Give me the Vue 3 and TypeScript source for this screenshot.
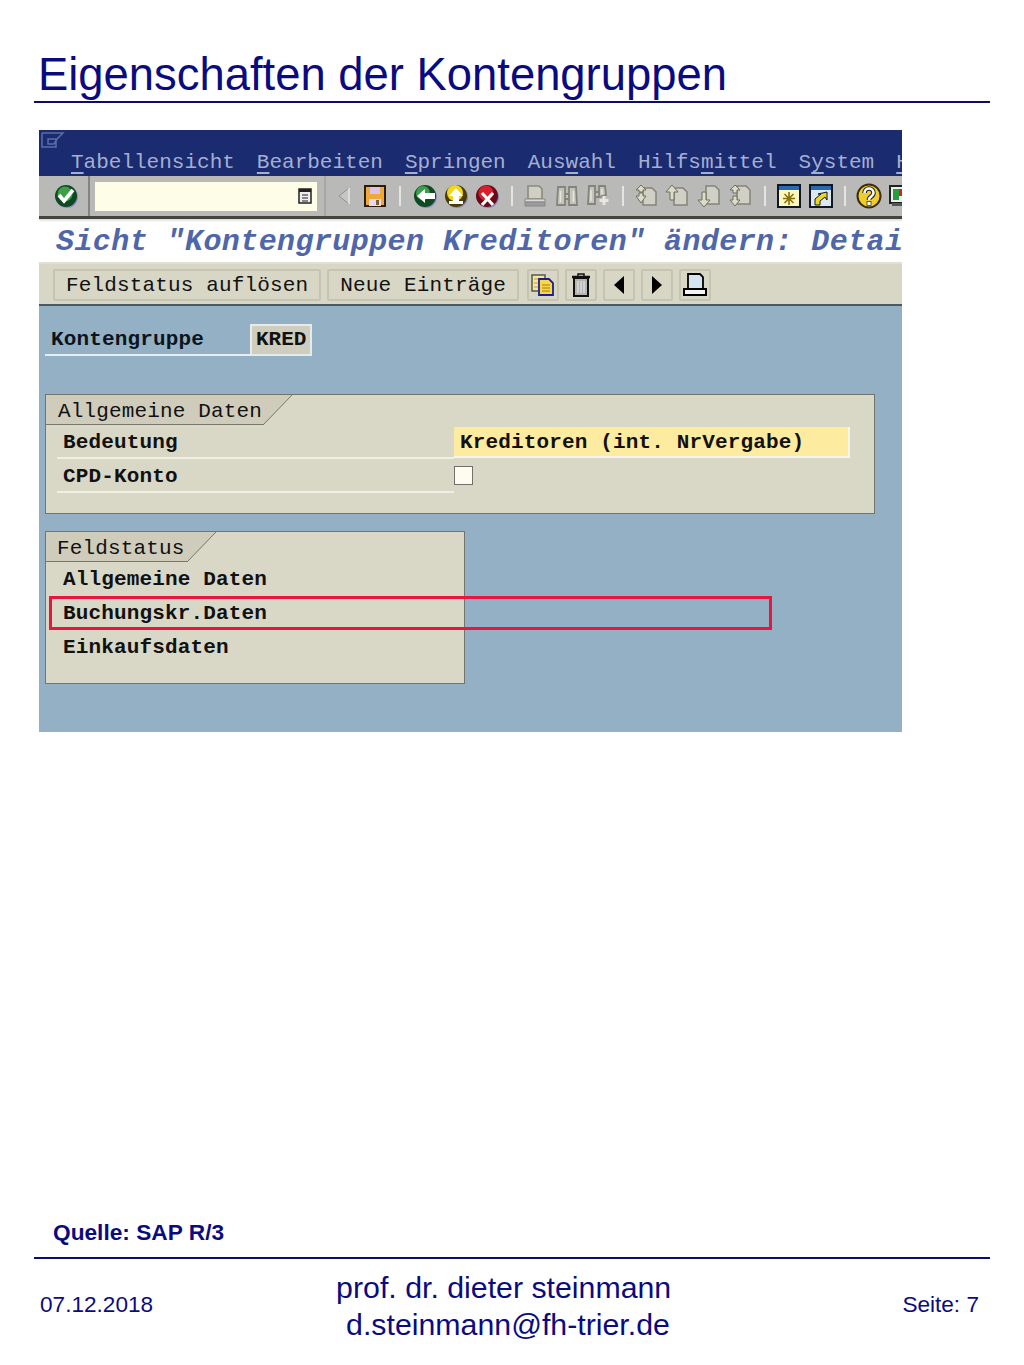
<script setup lang="ts">
const menus: { pre: string; key: string; post: string }[] = [
  { pre: '', key: 'T', post: 'abellensicht' },
  { pre: '', key: 'B', post: 'earbeiten' },
  { pre: '', key: 'S', post: 'pringen' },
  { pre: 'Aus', key: 'w', post: 'ahl' },
  { pre: 'Hilfs', key: 'm', post: 'ittel' },
  { pre: 'S', key: 'y', post: 'stem' },
  { pre: '', key: 'H', post: 'ilfe' }
]
</script>

<template>
  <div class="page">
    <header class="head">
      <h1>Eigenschaften der Kontengruppen</h1>
    </header>

    <section class="sap">
      <div class="menubar">
        <svg class="winicon" width="24" height="16" viewBox="0 0 24 16"><path d="M1 1h21l-6 6H7v5h6l3-5M1 1v14h14V8" fill="none" stroke="#5a6fa8" stroke-width="1.5"/></svg>
        <nav class="menus">
          <span v-for="m in menus" :key="m.post" class="menu">{{ m.pre }}<u>{{ m.key }}</u>{{ m.post }}</span>
        </nav>
      </div>

      <div class="toolbar">
        <div class="okcell">
          <svg width="26" height="26" viewBox="0 0 26 26"><circle cx="14" cy="14" r="11" fill="#8a8cc0"/><circle cx="13" cy="13" r="11" fill="#0f4a22"/><circle cx="12" cy="11" r="7.5" fill="#3f9e4a"/><path d="M6 12l5 6 9-11" fill="none" stroke="#fff" stroke-width="3.6"/></svg>
        </div>
        <div class="cmd">
          <svg width="14" height="16" viewBox="0 0 14 16"><path d="M1 1h12v14H1z" fill="#eee" stroke="#222" stroke-width="1.5"/><path d="M1 1h12v3H1z" fill="#222"/><path d="M4 7h6M4 10h6M4 13h6" stroke="#222"/></svg>
        </div>
        <div class="tools">
          <svg class="t-back" width="14" height="20" viewBox="0 0 14 20"><path d="M12 2v16L2 10z" fill="#c6c6c6" stroke="#8f8f8f"/><path d="M12 2v16" stroke="#eee" stroke-width="1.5"/></svg>
          <svg class="t-save" width="24" height="24" viewBox="0 0 24 24"><path d="M2 2h20v20H2z" fill="#f0a838" stroke="#2a1c08" stroke-width="2"/><path d="M7 3h10v7H7z" fill="#d8c4e8"/><path d="M6 15h12v7H6z" fill="#e8d8f0"/><path d="M13 16h3v5h-3z" fill="#80603a"/></svg>
          <i class="sep" />
          <svg class="t-nav" width="26" height="26" viewBox="0 0 26 26"><circle cx="14" cy="14" r="11" fill="#8a8cc0"/><circle cx="13" cy="13" r="11" fill="#0f4a22"/><circle cx="11" cy="10" r="7" fill="#3f9e4a"/><path d="M5 13l8-7v4h10v6H13v4z" fill="#fff"/></svg>
          <svg class="t-nav" width="26" height="26" viewBox="0 0 26 26"><circle cx="14" cy="14" r="11" fill="#8a8cc0"/><circle cx="13" cy="13" r="11" fill="#4a3c08"/><circle cx="12" cy="10" r="8" fill="#f0d818"/><path d="M13 5l7 8h-4v5h4v3H6v-3h4v-5H6z" fill="#fff"/></svg>
          <svg class="t-nav" width="26" height="26" viewBox="0 0 26 26"><circle cx="14" cy="14" r="11" fill="#8a8cc0"/><circle cx="13" cy="13" r="11" fill="#6a0a18"/><circle cx="12" cy="10" r="7.5" fill="#d8202c"/><path d="M8 10l11 12M19 10L8 22" stroke="#fff" stroke-width="3.2"/></svg>
          <i class="sep" />
          <svg class="t-pale" width="24" height="24" viewBox="0 0 24 24"><path d="M5 2h11l3 3v10H5z" fill="#cfcfc2" stroke="#8a8a82" stroke-width="1.6"/><path d="M2 15h20v3H2z" fill="#dcdcd4" stroke="#8a8a82"/><path d="M2 18h20v4H2z" fill="#9a9aa4" stroke="#8a8a82"/></svg>
          <svg class="t-pale" width="24" height="24" viewBox="0 0 24 24"><path d="M3 3h7v18H2zM14 3h7l1 18h-8zM10 10h4v5h-4z" fill="#c4c4ba" stroke="#84847c" stroke-width="1.8"/><path d="M5.500 7v11M18.500 7v11" stroke="#e4e4dc" stroke-width="1.6"/></svg>
          <svg class="t-pale" width="24" height="24" viewBox="0 0 24 24"><path d="M3 2h6v18H2zM13 2h6l1 9-7 2zM9 8h4v5H9z" fill="#c4c4ba" stroke="#84847c" stroke-width="1.8"/><path d="M5 6v11M16 5v5" stroke="#e4e4dc" stroke-width="1.6"/><path d="M18 12v9M13.500 16.500h9" stroke="#e8e8e0" stroke-width="3"/></svg>
          <i class="sep" />
          <svg class="t-pale" width="24" height="24" viewBox="0 0 24 24"><path d="M9 4h9l4 4v13H9z" fill="#d0d0c4" stroke="#84847c" stroke-width="1.5"/><path d="M7 1l5 5H9v2H5V6H2zM5 9h4v3h3l-5 7-5-7h3z" fill="#dcdcc8" stroke="#6f6f5c"/></svg>
          <svg class="t-pale" width="24" height="24" viewBox="0 0 24 24"><path d="M9 4h9l4 4v13H9z" fill="#d0d0c4" stroke="#84847c" stroke-width="1.5"/><path d="M7 1l6 7H9v8H5V8H1z" fill="#dcdcc8" stroke="#6f6f5c"/></svg>
          <svg class="t-pale" width="24" height="24" viewBox="0 0 24 24"><path d="M9 2h9l4 4v14H9z" fill="#d0d0c4" stroke="#84847c" stroke-width="1.5"/><path d="M7 23l6-7H9V8H5v8H1z" fill="#dcdcc8" stroke="#6f6f5c"/></svg>
          <svg class="t-pale" width="24" height="24" viewBox="0 0 24 24"><path d="M9 2h9l4 4v14H9z" fill="#d0d0c4" stroke="#84847c" stroke-width="1.5"/><path d="M7 1l5 5H9v3H5V6H2zM5 12h4v4h3l-5 6-5-6h3z" fill="#dcdcc8" stroke="#6f6f5c"/></svg>
          <i class="sep" />
          <svg class="t-win" width="24" height="24" viewBox="0 0 24 24"><path d="M1 1h22v22H1z" fill="#fdf8c0" stroke="#101828" stroke-width="2"/><path d="M2 2h20v4H2z" fill="#2a68b0"/><path d="M12 8v13M6 14.500h12M7.500 10l9 9M16.500 10l-9 9" stroke="#8a7008" stroke-width="1.6"/></svg>
          <svg class="t-win" width="24" height="24" viewBox="0 0 24 24"><path d="M1 1h22v22H1z" fill="#dce8f0" stroke="#101828" stroke-width="2"/><path d="M2 2h20v4H2z" fill="#2a68b0"/><path d="M6 21v-6l6-5H9l9-2v8l-2-3-5 4v4z" fill="#f0d818" stroke="#101828"/></svg>
          <i class="sep" />
          <svg class="t-help" width="26" height="26" viewBox="0 0 26 26"><circle cx="13" cy="13" r="11.500" fill="#f2cc28" stroke="#3a2c08" stroke-width="2"/><path d="M8.500 10c0-6 9-6 9 0 0 4-4.500 3-4.500 7" fill="none" stroke="#222" stroke-width="4.600"/><path d="M8.500 10c0-6 9-6 9 0 0 4-4.500 3-4.500 7" fill="none" stroke="#fff" stroke-width="2.600"/><rect x="11" y="18.500" width="4" height="4" fill="#fff" stroke="#222" stroke-width=".7"/></svg>
          <svg class="t-layout" width="24" height="24" viewBox="0 0 24 24"><path d="M1 2h22v17H1z" fill="#eee" stroke="#222" stroke-width="2"/><path d="M4 5h6v11H4z" fill="#22a040"/><path d="M10 5h8v7h-8z" fill="#d82020"/><path d="M3 19h14v3H3z" fill="#555"/></svg>
        </div>
      </div>

      <div class="titlebar"><h2>Sicht "Kontengruppen Kreditoren" ändern: Details</h2></div>

      <div class="apptools">
        <button class="btn text feld">Feldstatus auflösen</button>
        <button class="btn text">Neue Einträge</button>
        <button class="btn ic first">
          <svg width="26" height="24" viewBox="0 0 26 24"><path d="M2 2h13v16H2z" fill="#f2e6a0" stroke="#58584a" stroke-width="1.5"/><path d="M4 6h9M4 10h9M4 14h9" stroke="#c89a20"/><path d="M9 6h10l4 4v12H9z" fill="#f8d848" stroke="#1c1c9c" stroke-width="1.8"/><path d="M12 12h8M12 15h8M12 18h8" stroke="#a07810"/></svg>
        </button>
        <button class="btn ic">
          <svg width="20" height="24" viewBox="0 0 20 24"><path d="M1 4h18" stroke="#111" stroke-width="2.500"/><path d="M7 3V1h6v2" fill="none" stroke="#111" stroke-width="1.500"/><path d="M3 5h14v18H3z" fill="#b4b4b0" stroke="#111" stroke-width="2"/><path d="M7 8v12M10 8v12M13 8v12" stroke="#eee"/></svg>
        </button>
        <button class="btn ic">
          <svg width="12" height="18" viewBox="0 0 12 18"><path d="M11 0v18L1 9z" fill="#000"/></svg>
        </button>
        <button class="btn ic">
          <svg width="12" height="18" viewBox="0 0 12 18"><path d="M1 0v18L11 9z" fill="#000"/></svg>
        </button>
        <button class="btn ic">
          <svg width="24" height="24" viewBox="0 0 24 24"><path d="M5 1h12l3 3v12H5z" fill="#d4e4f0" stroke="#000" stroke-width="1.800"/><path d="M1 16h22v6H1z" fill="#f4f4f4" stroke="#000" stroke-width="2"/></svg>
        </button>
      </div>

      <div class="main">
        <div class="keyrow">
          <span class="keylabel">Kontengruppe</span>
          <span class="keyvalue">KRED</span>
        </div>

        <div class="group g1">
          <div class="tab">
            <span class="tabtext">Allgemeine Daten</span>
            <svg class="tabedge" width="30" height="30" viewBox="0 0 30 30"><path d="M0 30V0h29L0 30z" fill="#cfccbc"/><path d="M0 30L29 0" stroke="#77776c"/></svg>
          </div>
          <div class="rows">
            <div class="row r1">
              <span class="lbl under">Bedeutung</span>
              <span class="val">Kreditoren (int. NrVergabe)</span>
            </div>
            <div class="row r2">
              <span class="lbl under">CPD-Konto</span>
              <span class="check" />
            </div>
          </div>
        </div>

        <div class="group g2">
          <div class="tab">
            <span class="tabtext small">Feldstatus</span>
            <svg class="tabedge" width="30" height="30" viewBox="0 0 30 30"><path d="M0 30V0h29L0 30z" fill="#cfccbc"/><path d="M0 30L29 0" stroke="#77776c"/></svg>
          </div>
          <div class="list">
            <span class="lbl">Allgemeine Daten</span>
            <span class="lbl">Buchungskr.Daten</span>
            <span class="lbl">Einkaufsdaten</span>
          </div>
          <div class="marker" />
        </div>
      </div>
    </section>

    <footer class="foot">
      <p class="source">Quelle: SAP R/3</p>
      <div class="footrow">
        <span class="small-foot">07.12.2018</span>
        <div class="author">
          <span>prof. dr. dieter steinmann</span>
          <span class="mail">d.steinmann@fh-trier.de</span>
        </div>
        <span class="small-foot seite">Seite: 7</span>
      </div>
    </footer>
  </div>
</template>

<style scoped>
.page {
  height: 1365px;
  box-sizing: border-box;
  display: flex;
  flex-direction: column;
  background: #fff;
  font-family: "Liberation Sans", Arial, sans-serif;
  color: #0b0b80;
  overflow: hidden;
}
.head {
  margin: 47px 34px 0;
  border-bottom: 2px solid #0b0b70;
  height: 54px;
  padding-left: 4px;
}
h1 {
  margin: 0;
  font-weight: 400;
  font-size: 45.4px;
  line-height: 55px;
}
.sap {
  width: 863px;
  height: 602px;
  margin: 27px 0 0 39px;
  overflow: hidden;
  display: flex;
  flex-direction: column;
  font-family: "Liberation Mono", "DejaVu Sans Mono", monospace;
  font-size: 21px;
  color: #111;
  flex: none;
}
.menubar {
  height: 46px;
  flex: none;
  background: #1a2b70;
  position: relative;
}
.winicon { position: absolute; left: 2px; top: 2px; }
.menus {
  display: flex;
  gap: 22px;
  padding: 20px 0 0 32px;
  white-space: nowrap;
  color: #a5afd0;
  line-height: 25px;
}
.menu u { text-underline-offset: 4px; }
.toolbar {
  height: 40px;
  flex: none;
  display: flex;
  align-items: center;
  background: #b9b9b7;
  border-bottom: 3px solid #45453f;
  overflow: hidden;
}
.okcell {
  width: 51px;
  height: 100%;
  flex: none;
  box-sizing: border-box;
  display: flex;
  align-items: center;
  padding-left: 14px;
  border-right: 2px solid #85857f;
}
.cmd {
  width: 222px;
  height: 29px;
  flex: none;
  margin-left: 5px;
  background: #fefde8;
  display: flex;
  align-items: center;
  justify-content: flex-end;
  padding-right: 5px;
  box-sizing: border-box;
}
.tools {
  flex: none;
  margin-left: 7px;
  padding-left: 11px;
  height: 100%;
  border-left: 2px solid #a8a8a4;
  display: flex;
  align-items: center;
}
.tools svg { flex: none; }
.sep {
  width: 2px;
  height: 20px;
  background: #e4e4e0;
  flex: none;
}
.t-back { margin-right: 12px; }
.t-save { margin-right: 12px; }
.t-nav { margin-right: 5px; }
.sep + .t-nav { margin-left: 11px; }
.t-nav + .sep { margin-left: 6px; }
.t-save + .sep { margin-left: 0; }
.t-pale { margin-right: 7.500px; }
.sep + .t-pale { margin-left: 10px; }
.t-pale + .sep { margin-left: 4px; }
.t-win { margin-right: 8px; }
.sep + .t-win { margin-left: 11px; }
.t-win + .sep { margin-left: 3px; }
.t-help { margin-left: 10px; margin-right: 7px; }
.titlebar {
  flex: none;
  background: linear-gradient(#d8d8d8, #fff 3px);
  border-bottom: 2px solid #e2e0d4;
  padding: 5px 0 2px 17px;
  box-sizing: content-box;
  height: 36px;
  white-space: nowrap;
  overflow: hidden;
}
h2 {
  margin: 0;
  font-size: 30px;
  line-height: 36px;
  font-style: italic;
  font-weight: 700;
  letter-spacing: 0.42px;
  color: #4f66a8;
}
.apptools {
  height: 42px;
  flex: none;
  box-sizing: border-box;
  background: #d8d6c4;
  border-bottom: 2px solid #4c5a60;
  display: flex;
  align-items: center;
  gap: 6px;
  padding: 2px 0 0 14px;
}
.btn {
  height: 32px;
  box-sizing: border-box;
  border: 2px solid #c5c3b2;
  border-radius: 2px;
  background: #d8d6c4;
  padding: 0;
  color: #111;
  font: inherit;
  display: flex;
  align-items: center;
  justify-content: center;
}
.btn.text { letter-spacing: 0.15px; padding: 0 11px; }
.btn.ic { width: 32px; }
.btn.first { margin-left: 2px; }
.main {
  flex: 1;
  background: #94b0c4;
  position: relative;
  display: flex;
  flex-direction: column;
  align-items: flex-start;
  padding-left: 6px;
}
.keyrow {
  margin-top: 18px;
  display: flex;
  height: 32px;
  align-items: stretch;
}
.keylabel {
  width: 205px;
  box-sizing: border-box;
  padding-left: 6px;
  font-weight: 700;
  letter-spacing: 0.15px;
  line-height: 31px;
  border-bottom: 2px solid #e6f0f4;
  color: #0c1420;
}
.keyvalue {
  width: 62px;
  box-sizing: border-box;
  background: #cfcdbd;
  border: 2px solid #e6eaea;
  padding-left: 4px;
  font-weight: 700;
  line-height: 27px;
}
.group {
  box-sizing: border-box;
  background: #d9d7c6;
  border: 1px solid #74746c;
  position: relative;
}
.g1 { width: 830px; height: 120px; margin-top: 38px; }
.g2 { width: 420px; height: 153px; margin-top: 17px; }
.tab {
  display: flex;
  height: 30px;
}
.tabtext {
  background: #cfccbc;
  padding-left: 12px;
  width: 217px;
  flex: none;
  box-sizing: border-box;
  border-bottom: 1px solid #77776c;
  line-height: 33px;
  letter-spacing: 0.15px;
  white-space: nowrap;
}
.tabtext.small { width: 141px; padding-left: 11px; }
.rows { padding-left: 11px; margin-top: 2px; }
.row {
  display: flex;
  height: 34px;
}
.lbl {
  font-weight: 700;
  letter-spacing: 0.15px;
  line-height: 32px;
}
.under {
  width: 397px;
  height: 32px;
  box-sizing: border-box;
  padding-left: 6px;
  border-bottom: 2px solid #f0efe4;
}
.val {
  width: 396px;
  height: 31px;
  box-sizing: border-box;
  background: #fdeb9f;
  border-bottom: 2px solid #f6f5ea;
  border-right: 2px solid #f6f5ea;
  padding-left: 6px;
  font-weight: 700;
  letter-spacing: 0.15px;
  line-height: 32px;
}
.check {
  width: 19px;
  height: 19px;
  box-sizing: border-box;
  margin-top: 5px;
  background: #fdfcee;
  border: 1.500px solid #70706c;
}
.list {
  display: flex;
  flex-direction: column;
  padding: 1px 0 0 17px;
}
.list .lbl { height: 34px; line-height: 34px; }
.marker {
  position: absolute;
  left: 3px;
  top: 64px;
  width: 723px;
  height: 34px;
  box-sizing: border-box;
  border: 3px solid #e6163f;
  pointer-events: none;
}
.foot {
  margin-top: auto;
  flex: none;
}
.source {
  margin: 0 0 12px 53px;
  font-weight: 700;
  font-size: 22.700px;
  line-height: 25px;
}
.footrow {
  margin: 0 34px;
  height: 108px;
  box-sizing: border-box;
  border-top: 2px solid #0b0b70;
  display: flex;
  align-items: flex-start;
  padding: 10px 11px 0 6px;
}
.small-foot {
  font-size: 22.600px;
  line-height: 26px;
  margin-top: 23px;
}
.author {
  margin-left: 183px;
  display: flex;
  flex-direction: column;
  font-size: 30.300px;
  line-height: 37px;
  white-space: nowrap;
}
.mail { margin-left: 10px; }
.seite { margin-left: auto; }
</style>
